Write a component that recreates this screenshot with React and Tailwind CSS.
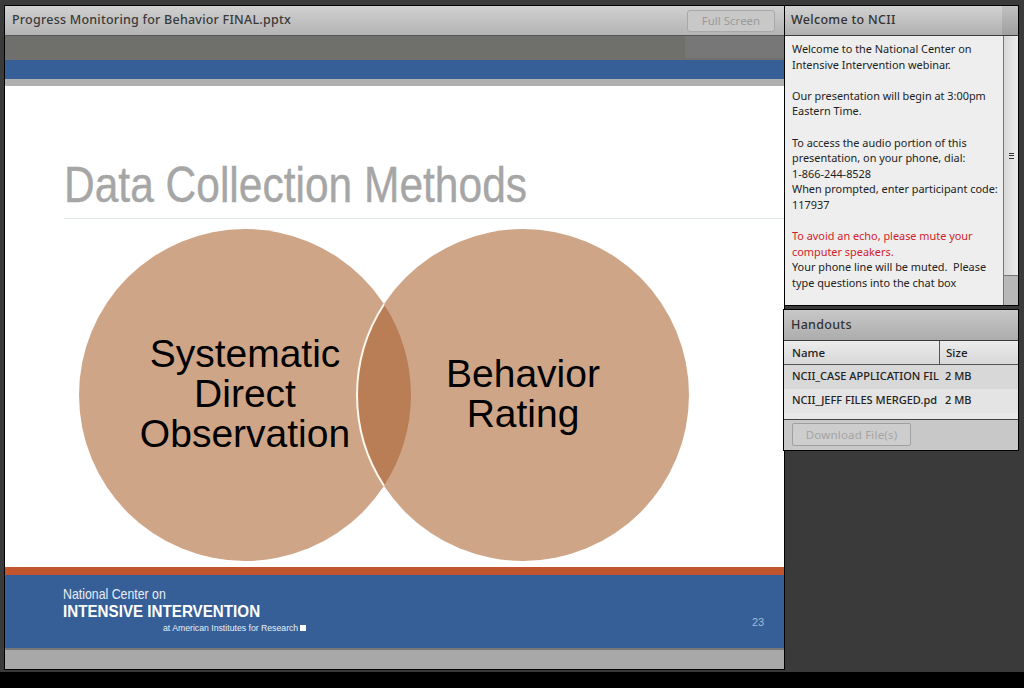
import React from 'react';

const uiFont = "font-['Noto_Sans',sans-serif]";
const slideFont = "font-['Liberation_Sans',sans-serif]";

const welcomeLines = [
  { text: 'Welcome to the National Center on' },
  { text: 'Intensive Intervention webinar.' },
  { text: '' },
  { text: 'Our presentation will begin at 3:00pm' },
  { text: 'Eastern Time.' },
  { text: '' },
  { text: 'To access the audio portion of this' },
  { text: 'presentation, on your phone, dial:' },
  { text: '1-866-244-8528' },
  { text: 'When prompted, enter participant code:' },
  { text: '117937' },
  { text: '' },
  { text: 'To avoid an echo, please mute your', red: true },
  { text: 'computer speakers.', red: true },
  { text: 'Your phone line will be muted.  Please' },
  { text: 'type questions into the chat box' },
];

const Venn = () => (
  <div className="relative flex w-[610px] h-[332px] ml-[74px] mt-[10px]">
    <div className={`w-[332px] h-[332px] rounded-full bg-[#cfa587] flex items-center justify-center text-center text-black text-[39px] leading-[40px] ${slideFont}`}>
      <div className="-mt-[2px]">Systematic<br />Direct<br />Observation</div>
    </div>
    <div className={`w-[332px] h-[332px] -ml-[54px] rounded-full bg-[#cfa587] flex items-center justify-center text-center text-black text-[39px] leading-[40px] ${slideFont}`}>
      <div className="-mt-[2px]">Behavior<br />Rating</div>
    </div>
    <svg className="absolute left-0 top-0" width="610" height="332" viewBox="0 0 610 332" fill="none">
      <path d="M305 75.3A166 166 0 0 1 305 256.7A166 166 0 0 1 305 75.3Z" fill="#b97e55" />
      <path d="M305 75.3A166 166 0 0 0 305 256.7" stroke="#fff8ee" strokeWidth="2" />
    </svg>
  </div>
);

const Slide = () => (
  <div className="flex-1 flex flex-col min-h-0">
    <div className="h-[24px] bg-[#6f6f6c] relative">
      <div className="absolute right-0 top-0 w-[99px] h-[22px] bg-[#777]" />
    </div>
    <div className="h-[19px] bg-[#355f96]" />
    <div className="h-[7px] bg-[#b0b0b0]" />
    <div className="h-[481px] bg-white flex flex-col">
      <div className={`ml-[59px] mt-[69px] h-[64px] border-b border-[#dfe6e6] text-[#a6a6a6] text-[50px] leading-[60px] whitespace-nowrap ${slideFont}`}>
        <span className="inline-block origin-left scale-x-[0.85] [-webkit-text-stroke:0.4px_#a6a6a6]">Data Collection Methods</span>
      </div>
      <Venn />
    </div>
    <div className="h-[8px] bg-[#c2552d]" />
    <div className={`h-[73px] bg-[#355f96] relative pl-[58px] pt-[12px] text-white ${slideFont}`}>
      <div className="text-[14.5px] leading-[15px] text-[#e8eef6] origin-left scale-x-[0.85] whitespace-nowrap">National Center on</div>
      <div className="text-[16.5px] leading-[19px] font-bold origin-left scale-x-[0.92] whitespace-nowrap">INTENSIVE INTERVENTION</div>
      <div className="ml-[100px] mt-[1px] flex items-center gap-[2px] text-[8.7px] leading-[12px] text-[#e8eef6] whitespace-nowrap">
        <span>at American Institutes for Research</span>
        <span className="w-[6px] h-[6px] bg-white" />
      </div>
      <span className="absolute left-[747px] top-[40px] text-[11px] leading-[14px] text-[#a4b9d8]">23</span>
    </div>
    <div className="h-[2px] bg-[#777]" />
    <div className="flex-1 bg-[#a8a8a8]" />
  </div>
);

export default function App() {
  return (
    <div className={`w-[1024px] h-[688px] overflow-hidden flex flex-col bg-black ${uiFont}`}>
      <div className="h-[672px] bg-[#3a3a3a] flex pt-[5px] pl-[4px] items-start">
        <div className="w-[781px] h-[665px] border border-black flex flex-col">
          <div className="h-[30px] flex items-center justify-between pl-[7px] pr-[9px] border-b border-[#555] bg-gradient-to-b from-[#d0d0d0] to-[#b4b4b4]">
            <span className="text-[12.5px] font-medium text-[#3a3a3a] tracking-[0.23px]">Progress Monitoring for Behavior FINAL.pptx</span>
            <button className="w-[88px] h-[22px] rounded-[3px] border border-[#a8a8a8] text-[11.5px] text-[#9a9a9a] bg-[#c8c8c8]">Full Screen</button>
          </div>
          <Slide />
        </div>

        <div className="w-[235px] -ml-px flex flex-col gap-[3px]">
          <div className="h-[301px] border border-black flex flex-col bg-[#eee]">
            <div className="h-[30px] flex items-center border-b border-[#3c3c3c] bg-gradient-to-b from-[#d2d2d2] to-[#b0b0b0]">
              <span className="flex-1 pl-[6px] text-[12.5px] font-medium text-[#333] tracking-[0.3px]">Welcome to NCII</span>
              <div className="w-[16px] h-full bg-gradient-to-b from-[#c0c0c0] to-[#a0a0a0]" />
            </div>
            <div className="flex-1 flex min-h-0">
              <div className="w-[218px] pl-[7px] pt-[5px] text-[10.9px] leading-[15.6px] text-[#222] whitespace-pre overflow-hidden">
                {welcomeLines.map((line, i) => (
                  <div key={i} className={`h-[15.6px] ${line.red ? 'text-[#d2232a]' : ''}`}>{line.text}</div>
                ))}
              </div>
              <div className="flex-1 flex flex-col border-l border-[#777]">
                <div className="flex-1 bg-gradient-to-r from-[#d8d8d8] to-[#ececec] flex items-center justify-center">
                  <div className="w-[5px] h-[6px] border-y border-[#333] flex items-center">
                    <div className="w-full h-px bg-[#333]" />
                  </div>
                </div>
                <div className="h-[30px] border-t border-[#777] bg-[#b8b8b8]" />
              </div>
            </div>
          </div>

          <div className="h-[142px] -ml-px border border-black flex flex-col">
            <div className="h-[31px] flex items-center pl-[7px] border-b border-[#3c3c3c] bg-gradient-to-b from-[#c8c8c8] to-[#acacac]">
              <span className="text-[12.5px] font-medium text-[#333] tracking-[0.3px]">Handouts</span>
            </div>
            <div className="h-[24px] flex items-center text-[11.5px] font-medium text-[#222] border-b border-[#555] bg-gradient-to-b from-[#ececec] to-[#d8d8d8]">
              <div className="w-[156px] h-full flex items-center pl-[8px] border-r border-[#555]">Name</div>
              <div className="pl-[6px]">Size</div>
            </div>
            <div className="h-[24px] pb-[1px] flex items-center text-[11px] font-medium text-[#222] bg-[#d8d8d8]">
              <div className="w-[144px] ml-[8px] whitespace-nowrap">NCII_CASE APPLICATION FIL</div>
              <div className="pl-[9px]">2 MB</div>
            </div>
            <div className="h-[24px] pb-[1px] flex items-center text-[11px] font-medium text-[#222] bg-[#e4e4e4]">
              <div className="w-[144px] ml-[8px] whitespace-nowrap">NCII_JEFF FILES MERGED.pd</div>
              <div className="pl-[9px]">2 MB</div>
            </div>
            <div className="h-[7px] bg-[#e8e8e8] border-b border-[#444]" />
            <div className="flex-1 bg-[#c8c8c8] pl-[8px] pt-[3px]">
              <button className="block w-[119px] h-[23px] rounded-[2px] border border-[#a0a0a0] text-[11.5px] tracking-[0.2px] text-[#a4a4a4] bg-[#cdcdcd]">Download File(s)</button>
            </div>
          </div>
        </div>
      </div>
      <div className="flex-1 bg-black" />
    </div>
  );
}
